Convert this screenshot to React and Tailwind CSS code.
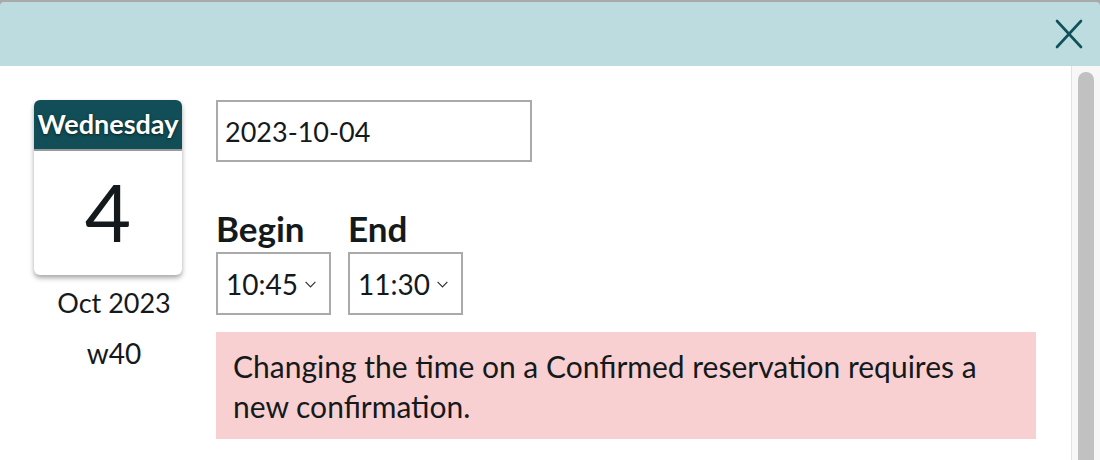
import { useState } from "react";

export default function App() {
  const [date, setDate] = useState("2023-10-04");
  const [begin, setBegin] = useState("10:45");
  const [end, setEnd] = useState("11:30");

  const times = ["10:00", "10:15", "10:30", "10:45", "11:00", "11:15", "11:30", "11:45"];

  return (
    <div className="w-[1100px] h-[460px] overflow-hidden bg-[#a9a9a9] pt-[2px] font-['Lato','Liberation_Sans',sans-serif] text-[#141a1b]">
      {/* header */}
      <div className="h-[64px] bg-[#bcdcdf] rounded-t-[4px] flex items-center justify-end pr-[15px]">
        <button className="w-[32px] h-[32px] flex items-center justify-center">
          <svg width="30" height="30" viewBox="0 0 30 30" fill="none" stroke="#11525a" strokeWidth="2.6" strokeLinecap="round">
            <path d="M3 2 L27 28" />
            <path d="M27 2 L3 28" />
          </svg>
        </button>
      </div>

      <div className="flex h-[394px] bg-white">
        <div className="flex-1 flex pl-[34px] pt-[34px]">
          {/* calendar leaf */}
          <div className="w-[148px] flex flex-col items-center">
            <div className="w-[148px] h-[175px] bg-white rounded-[6px] shadow-[0_3px_5px_rgba(0,0,0,0.35)] overflow-hidden flex flex-col">
              <div className="h-[51px] bg-[#124e57] border-b-2 border-[#9a9a9a] flex items-center justify-center text-white font-bold text-[27px] [text-shadow:0_1px_3px_rgba(0,0,0,0.6)]">
                Wednesday
              </div>
              <div className="flex-1 flex items-center justify-center text-[80px] leading-none pb-[4px]">
                4
              </div>
            </div>
            <div className="mt-[12px] ml-[12px] text-[27px] leading-[32px]">Oct 2023</div>
            <div className="mt-[18px] ml-[12px] text-[28px] leading-[32px]">w40</div>
          </div>

          {/* fields */}
          <div className="ml-[34px] flex flex-col">
            <input
              value={date}
              onChange={(e) => setDate(e.target.value)}
              className="w-[316px] h-[62px] border-2 border-[#aaaaaa] px-[7px] text-[27px] outline-none"
            />
            <div className="flex gap-[17px] mt-[48px]">
              <div className="flex flex-col">
                <span className="font-bold text-[35px] leading-[36px] mb-[6px]">Begin</span>
                <TimeSelect value={begin} onChange={setBegin} times={times} />
              </div>
              <div className="flex flex-col">
                <span className="font-bold text-[35px] leading-[36px] mb-[6px]">End</span>
                <TimeSelect value={end} onChange={setEnd} times={times} />
              </div>
            </div>
            <div className="w-[820px] mt-[17px] bg-[#f9d0d2] pl-[17px] pr-[50px] pt-[14px] pb-[13px] text-[30px] leading-[40px]">
              Changing the time on a Confirmed reservation requires a new confirmation.
            </div>
          </div>
        </div>

        {/* scrollbar */}
        <div className="w-[29px] bg-[#f7f7f7] border-l border-[#e2e2e2] flex justify-center pt-[6px]">
          <div className="w-[16px] h-full bg-[#c1c1c1] rounded-t-full" />
        </div>
      </div>
    </div>
  );
}

function TimeSelect({ value, onChange, times }) {
  return (
    <div className="relative w-[115px] h-[63px] border-2 border-[#aaaaaa] bg-white">
      <select
        value={value}
        onChange={(e) => onChange(e.target.value)}
        className="appearance-none w-full h-full pl-[8px] text-[28px] bg-transparent outline-none"
      >
        {times.map((t) => (
          <option key={t} value={t}>
            {t}
          </option>
        ))}
      </select>
      <svg className="absolute right-[13px] top-[27px] w-[11px] h-[7px] pointer-events-none" viewBox="0 0 11 7" fill="none" stroke="#333" strokeWidth="1.2">
        <path d="M0.6 0.8 L5.5 5.8 L10.4 0.8" />
      </svg>
    </div>
  );
}
